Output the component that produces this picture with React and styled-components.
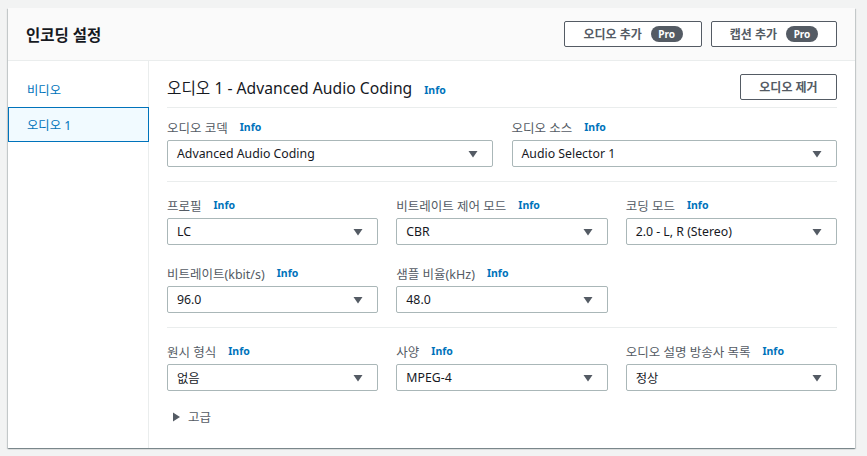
import React from "react";
import styled, { createGlobalStyle } from "styled-components";

const Global = createGlobalStyle`
  html, body { margin: 0; padding: 0; background: #f2f3f3; }
  body {
    font-family: "Noto Sans", "Noto Sans CJK KR", sans-serif;
    color: #16191f;
    -webkit-font-smoothing: antialiased;
  }
  * { box-sizing: border-box; }
`;

const Page = styled.div`
  padding: 8px 12px 7px 8px;
`;

const Card = styled.div`
  background: #fff;
  box-shadow: 0 1px 1px 0 rgba(0, 28, 36, 0.3), 1px 1px 1px 0 rgba(0, 28, 36, 0.15),
    -1px 1px 1px 0 rgba(0, 28, 36, 0.15);
`;

const Header = styled.div`
  display: flex;
  align-items: center;
  justify-content: space-between;
  padding: 13px 18px 13px 18px;
  background: #fafafa;
  border-bottom: 1px solid #eaeded;
`;

const Title = styled.h2`
  margin: 0;
  font-size: 15.5px;
  font-weight: 700;
  color: #16191f;
`;

const ButtonGroup = styled.div`
  display: flex;
  gap: 9px;
`;

const Button = styled.button`
  display: inline-flex;
  align-items: center;
  justify-content: center;
  gap: 9px;
  height: 26px;
  padding: 0 18px;
  min-width: ${(p) => p.$minWidth || "auto"};
  background: #fff;
  border: 1px solid #545b64;
  border-radius: 2px;
  font-family: inherit;
  font-size: 12px;
  font-weight: 700;
  color: #545b64;
  cursor: pointer;
`;

const ProBadge = styled.span`
  display: inline-flex;
  align-items: center;
  justify-content: center;
  width: 32px;
  height: 16px;
  border-radius: 8px;
  background: #545b64;
  color: #fff;
  font-size: 10px;
  font-weight: 700;
`;

const Body = styled.div`
  display: flex;
  min-height: 387px;
`;

const SideNav = styled.nav`
  width: 141px;
  flex: none;
  border-right: 1px solid #eaeded;
  padding-top: 11px;
`;

const NavItem = styled.div`
  height: 35px;
  display: flex;
  align-items: center;
  padding-left: 18px;
  font-size: 12.3px;
  color: #0073bb;
  background: ${(p) => (p.$active ? "#f1faff" : "transparent")};
  border: 1px solid ${(p) => (p.$active ? "#0073bb" : "transparent")};
  margin-right: ${(p) => (p.$active ? "-1px" : "0")};
`;

const Main = styled.div`
  flex: 1;
  padding: 13px 18px 0 18px;
`;

const HeadingRow = styled.div`
  display: flex;
  align-items: center;
  justify-content: space-between;
  padding-bottom: 7px;
  border-bottom: 1px solid #eaeded;
`;

const Heading = styled.h3`
  margin: 0;
  font-size: 15.7px;
  font-weight: 400;
  color: #16191f;
  display: flex;
  align-items: baseline;
  gap: 12px;
`;

const Info = styled.a`
  font-size: 10.5px;
  font-weight: 700;
  color: #0073bb;
  text-decoration: none;
`;

const Section = styled.div`
  display: grid;
  grid-template-columns: ${(p) => `repeat(${p.$cols}, 1fr)`};
  column-gap: ${(p) => (p.$cols === 2 ? "19px" : "18px")};
  row-gap: 18px;
  padding: ${(p) => p.$pad || "13px 0 14px"};
  border-bottom: ${(p) => (p.$last ? "none" : "1px solid #eaeded")};
`;

const Field = styled.div`
  display: flex;
  flex-direction: column;
  gap: 3px;
`;

const Label = styled.div`
  display: flex;
  align-items: center;
  gap: 12px;
  height: 20px;
  font-size: 12.5px;
  color: #545b64;
`;

const SelectBox = styled.div`
  display: flex;
  align-items: center;
  justify-content: space-between;
  height: 27px;
  padding: 0 11px 0 9px;
  border: 1px solid #aab7b8;
  border-radius: 2px;
  background: #fff;
  font-size: 12.3px;
  color: #16191f;
`;

const Expand = styled.div`
  display: flex;
  align-items: center;
  gap: 6px;
  padding: 16px 0 0 5px;
  font-size: 12.5px;
  color: #545b64;
`;

const CaretDown = () => (
  <svg width="16" height="16" viewBox="0 0 16 16">
    <path d="M3.5 5h9l-4.5 6.5z" fill="#545b64" />
  </svg>
);

const CaretRight = () => (
  <svg width="10" height="12" viewBox="0 0 10 12">
    <path d="M1 1.5l7 4.5-7 4.5z" fill="#545b64" />
  </svg>
);

const SelectField = ({ label, value }) => (
  <Field>
    <Label>
      {label}
      <Info href="#">Info</Info>
    </Label>
    <SelectBox>
      <span>{value}</span>
      <CaretDown />
    </SelectBox>
  </Field>
);

export default function App() {
  return (
    <>
      <Global />
      <Page>
        <Card>
          <Header>
            <Title>인코딩 설정</Title>
            <ButtonGroup>
              <Button>
                오디오 추가 <ProBadge>Pro</ProBadge>
              </Button>
              <Button>
                캡션 추가 <ProBadge>Pro</ProBadge>
              </Button>
            </ButtonGroup>
          </Header>
          <Body>
            <SideNav>
              <NavItem>비디오</NavItem>
              <NavItem $active>오디오 1</NavItem>
            </SideNav>
            <Main>
              <HeadingRow>
                <Heading>
                  오디오 1 - Advanced Audio Coding
                  <Info href="#">Info</Info>
                </Heading>
                <Button $minWidth="97px">오디오 제거</Button>
              </HeadingRow>
              <Section $cols={2} $pad="9px 0 14px">
                <SelectField label="오디오 코덱" value="Advanced Audio Coding" />
                <SelectField label="오디오 소스" value="Audio Selector 1" />
              </Section>
              <Section $cols={3}>
                <SelectField label="프로필" value="LC" />
                <SelectField label="비트레이트 제어 모드" value="CBR" />
                <SelectField label="코딩 모드" value="2.0 - L, R (Stereo)" />
                <SelectField label="비트레이트(kbit/s)" value="96.0" />
                <SelectField label="샘플 비율(kHz)" value="48.0" />
              </Section>
              <Section $cols={3} $last $pad="13px 0 0">
                <SelectField label="원시 형식" value="없음" />
                <SelectField label="사양" value="MPEG-4" />
                <SelectField label="오디오 설명 방송사 목록" value="정상" />
              </Section>
              <Expand>
                <CaretRight />
                고급
              </Expand>
            </Main>
          </Body>
        </Card>
      </Page>
    </>
  );
}
